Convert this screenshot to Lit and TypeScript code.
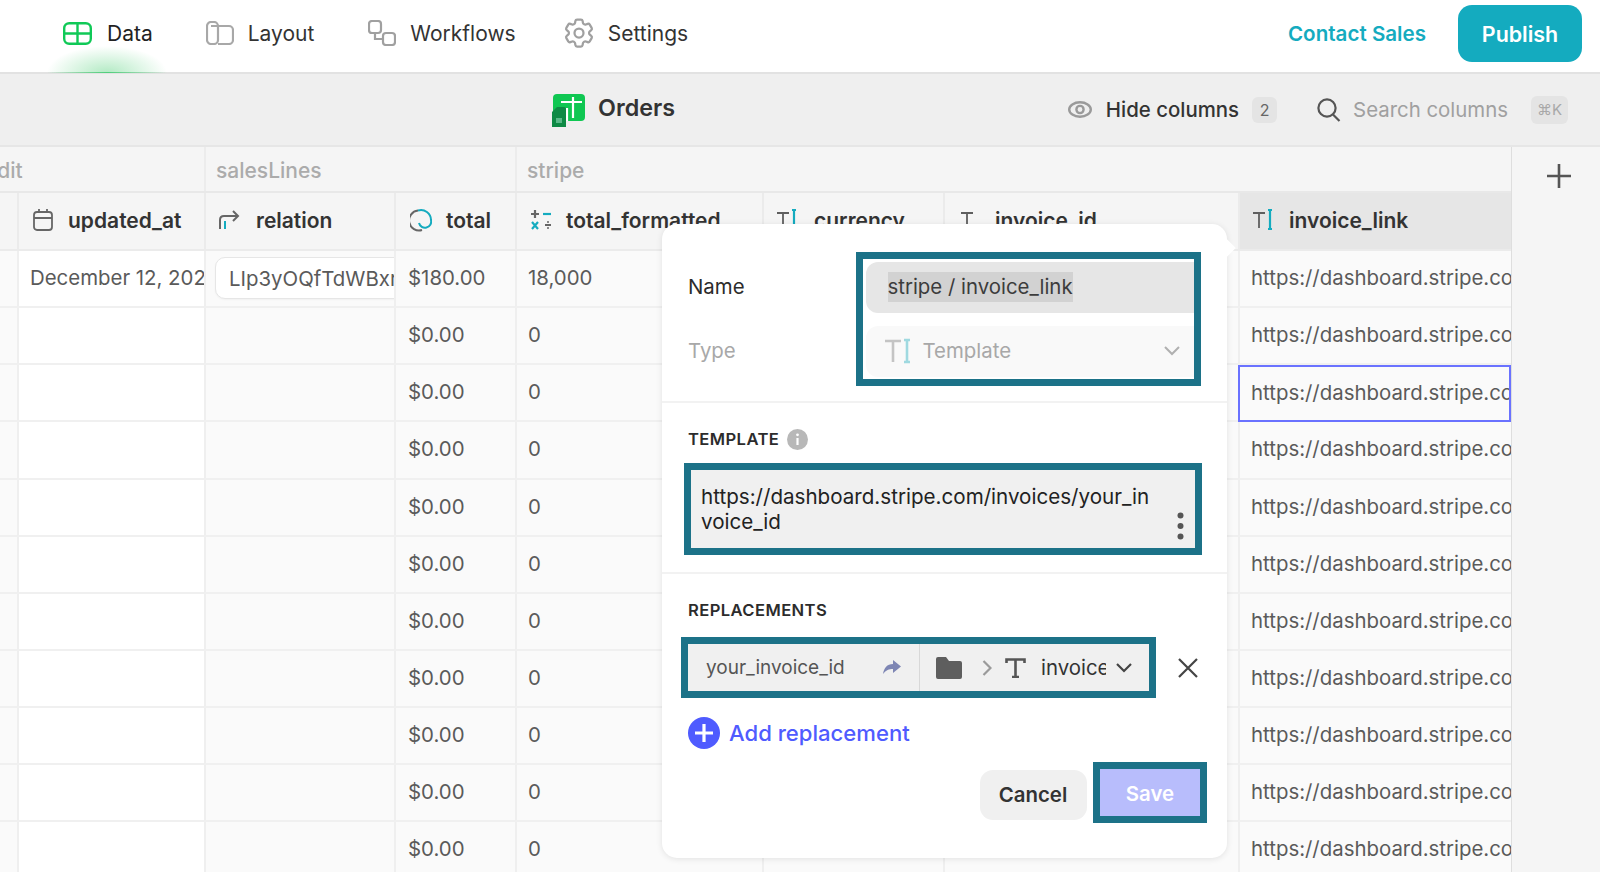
import { LitElement, html, css, svg } from "lit";
import { customElement } from "lit/decorators.js";
import { classMap } from "lit/directives/class-map.js";

const textIcon = (bar = true) => html`<svg class="hi" width="22" height="24" viewBox="0 0 22 24" fill="none">
  <path d="M1 5h12M7 5v15" stroke="#5f5f5f" stroke-width="1.8"/>
  ${bar ? svg`<path d="M16 2h4M18 2v19M16 21h4" stroke="#14abbf" stroke-width="2.2"/>` : ""}
</svg>`;

const columns = [
  { name: "updated_at", pad: 14, gap: 15, icon: html`<svg class="hi" width="20" height="24" viewBox="0 0 20 24" fill="none" stroke="#666" stroke-width="1.8"><rect x="1" y="4" width="18" height="18" rx="3"/><path d="M1 10h18M6 1v4M14 1v4"/></svg>` },
  { name: "relation", pad: 13, gap: 16, icon: html`<svg class="hi" width="21" height="22" viewBox="0 0 21 22" fill="none" stroke-width="2"><path d="M1 20V11c0-3 2-4 4-4h14M14 2l5 5-5 5" stroke="#666"/><path d="M6 20v-8" stroke="#14abbf"/></svg>` },
  { name: "total", pad: 14, gap: 14, icon: html`<svg class="hi" width="22" height="24" viewBox="0 0 22 24" fill="none" stroke-width="2"><path d="M8 2.5A10 10 0 1 0 12 22" stroke="#666"/><path d="M8 2.5A10 10 0 0 1 21 12 6 6 0 0 1 9 15" stroke="#14abbf"/></svg>` },
  { name: "total_formatted", pad: 14, gap: 15, icon: html`<svg class="hi" width="20" height="22" viewBox="0 0 20 22" fill="none" stroke-width="2.2"><path d="M4 1v8M0 5h8M14 5h6M14 16h6" stroke="#666"/><path d="M12 5h8" stroke="#14abbf"/><path d="M1 13l6 7M7 13l-6 7" stroke="#14abbf"/><circle cx="17" cy="13" r="1" fill="#666"/><circle cx="17" cy="19" r="1" fill="#666"/></svg>` },
  { name: "currency", pad: 12, gap: 16, icon: textIcon() },
  { name: "invoice_id", pad: 15, gap: 13, icon: textIcon(false) },
  { name: "invoice_link", pad: 12, gap: 15, icon: textIcon() },
];

@customElement("app-root")
export class AppRoot extends LitElement {
  static styles = css`
    :host {
      display: block;
      position: relative;
      height: 872px;
      overflow: hidden;
      background: #f5f5f5;
      font-family: Inter, "Liberation Sans", sans-serif;
      font-size: 20.4px;
      color: #333;
    }
    svg { display: block; flex: none; }

    /* top bar */
    .nav {
      height: 74px;
      box-sizing: border-box;
      background: #fff;
      border-bottom: 2px solid #e2e2e2;
      display: flex;
      align-items: center;
      padding: 0 18px 6px 63px;
    }
    .tab { display: flex; align-items: center; gap: 14px; margin-right: 54px; color: #333; position: relative; font-size: 21px; }
    .tab.on { color: #222; gap: 15px; margin-right: 53px; }
    .tab.wf { margin-right: 48px; }
    .glow {
      position: absolute;
      left: -16px;
      top: 25px;
      width: 120px;
      height: 27px;
      background:
        linear-gradient(90deg, rgba(16, 200, 80, 0), rgba(16, 200, 80, 0.55), rgba(16, 200, 80, 0)) bottom / 100% 1px no-repeat,
        radial-gradient(ellipse 50% 100% at 50% 100%, rgba(16, 190, 70, 0.32), rgba(16, 190, 70, 0));
    }
    .contact { margin-left: auto; color: #14abbf; font-weight: 600; font-size: 20.6px; margin-right: 32px; }
    .publish {
      width: 124px;
      height: 57px;
      margin-top: 1px;
      border-radius: 14px;
      background: #14abbf;
      color: #fff;
      font-weight: 600;
      font-size: 21.4px;
      display: flex;
      align-items: center;
      justify-content: center;
    }

    /* title bar */
    .bar {
      height: 73px;
      box-sizing: border-box;
      background: #efefef;
      border-bottom: 2px solid #e6e6e6;
      display: flex;
      align-items: center;
      padding: 0 32px 4px 552px;
    }
    .logo { margin-top: 4px; }
    .title { font-size: 23.3px; font-weight: 600; margin-left: 12px; color: #333; }
    .tools { margin-left: auto; display: flex; align-items: center; padding-top: 4px; }
    .hide { margin-left: 14px; color: #333; font-weight: 500; }
    .badge {
      margin-left: 13px;
      width: 25px;
      height: 26px;
      border-radius: 6px;
      background: #e4e4e4;
      color: #666;
      font-size: 16px;
      display: flex;
      align-items: center;
      justify-content: center;
    }
    .search { margin-left: 40px; }
    .placeholder { margin-left: 12px; color: #a0a0a0; }
    .kbd {
      margin-left: 23px;
      width: 37px;
      height: 28px;
      border-radius: 6px;
      background: #e4e4e4;
      color: #a8a8a8;
      font-size: 15px;
      display: flex;
      align-items: center;
      justify-content: center;
    }

    /* table */
    .page { display: flex; }
    .table { width: 1512px; flex: none; overflow: hidden; border-right: 1px solid #dedede; box-sizing: border-box; }
    .add { padding: 15px 0 0 33px; }
    .groups, .row, .heads {
      display: grid;
      grid-template-columns: 17px 187px 190px 121px 247px 181px 295px 273px;
    }
    .groups {
      height: 46px;
      box-sizing: border-box;
      border-bottom: 2px solid #e8e8e8;
      color: #ababab;
      font-weight: 500;
      font-size: 21px;
    }
    .group {
      display: flex;
      align-items: center;
      padding: 2px 0 0 10px;
      border-left: 2px solid #ececec;
      overflow: hidden;
      white-space: nowrap;
    }
    .group.first { border-left: 0; padding-left: 0; grid-column: span 2; }
    .group.first span { margin-left: -35px; }
    .group.sales { grid-column: span 2; }
    .group.stripe { grid-column: span 4; }
    .heads { height: 58px; }
    .head {
      display: flex;
      align-items: center;
      white-space: nowrap;
      overflow: hidden;
      box-sizing: border-box;
      padding-bottom: 2px;
      font-weight: 600;
      font-size: 21px;
      color: #333;
      border-left: 2px solid #ebebeb;
      border-bottom: 2px solid #ebebeb;
    }
    .head.edge { border-left: 0; }
    .head.active { background: #e6e6e6; }
    .row { height: 57.14px; }
    .cell {
      display: flex;
      align-items: center;
      box-sizing: border-box;
      padding: 0 0 2px 11px;
      background: #fafafa;
      color: #5a5a5a;
      white-space: nowrap;
      overflow: hidden;
      border-left: 2px solid #efefef;
      border-bottom: 2px solid #f0f0f0;
    }
    .cell.edge { border-left: 0; padding: 0; }
    .cell.date { background: #fff; }
    .cell.money { padding-left: 12px; }
    .cell.picked { border: 2px solid #6a72ff; }
    .chip {
      height: 42px;
      padding-left: 13px;
      margin: 1px 0 0 -2px;
      min-width: 190px;
      display: flex;
      align-items: center;
      background: #fff;
      border: 1.5px solid #e6e6e6;
      border-radius: 10px;
      box-sizing: border-box;
      box-shadow: 0 1px 2px rgba(0, 0, 0, 0.04);
    }

    /* popover */
    .popup {
      position: absolute;
      left: 662px;
      top: 224px;
      width: 565px;
      height: 634px;
      box-sizing: border-box;
      background: #fff;
      border-radius: 15px;
      box-shadow: 0 1px 6px rgba(0, 0, 0, 0.1);
      color: #2c2c2c;
    }
    .tip {
      position: absolute;
      left: -2px;
      top: 0;
      width: 100%;
      height: 100%;
      pointer-events: none;
    }
    .tip::after {
      content: "";
      position: absolute;
      right: -7px;
      top: 15px;
      width: 18px;
      height: 18px;
      background: #fff;
      transform: rotate(45deg);
    }
    .sec { position: relative; padding: 0 26px; border-bottom: 2px solid #f2f2f2; box-sizing: border-box; }
    .sec.one { height: 179px; padding-top: 28px; display: flex; }
    .sec.two { height: 171px; padding-top: 24px; }
    .sec.three { border: 0; padding-top: 24px; }
    .labels { width: 167.5px; flex: none; padding-top: 9px; display: flex; flex-direction: column; }
    .labels div { height: 51px; display: flex; align-items: center; }
    .labels div + div { margin-top: 13px; color: #a8a8a8; }
    .mark { box-sizing: border-box; border: 7px solid #1c7288; }
    .fields {
      width: 345.5px;
      height: 134px;
      padding: 3px 0 0 3px;
      overflow: hidden;
    }
    .input {
      height: 51px;
      width: 345px;
      border-radius: 12px;
      background: #e6e6e6;
      display: flex;
      align-items: center;
      padding: 0 0 2px 22px;
      box-sizing: border-box;
      color: #3c3c3c;
    }
    .input span { background: #d2d2d2; line-height: 30px; }
    .select {
      margin-top: 13px;
      height: 51px;
      width: 347px;
      border-radius: 12px;
      background: #f9f9f9;
      display: flex;
      align-items: center;
      padding: 0 0 2px 18px;
      box-sizing: border-box;
      color: #a8a8a8;
    }
    .select .v { margin-left: 11px; flex: 1; }
    .select svg:last-child { margin-right: 33px; }
    .caps { font-size: 16.6px; font-weight: 600; color: #2c2c2c; display: flex; align-items: center; gap: 8px; height: 24px; letter-spacing: 0.4px; }
    .template {
      margin: 12px -1px 0 -4px;
      height: 92px;
      background: #f0f0f0;
      display: flex;
      padding: 14px 11px 0 10px;
      color: #222;
      font-size: 20.6px;
      line-height: 25px;
    }
    .template .t { width: 454px; word-break: break-all; }
    .template svg { margin: 28px 0 0 22px; }
    .replace { display: flex; align-items: center; margin: 15px 0 0 -7px; }
    .pair {
      width: 475px;
      height: 61px;
      background: #f0f0f0;
      display: flex;
      align-items: center;
      color: #555;
    }
    .pair .left {
      width: 232px;
      height: 100%;
      flex: none;
      display: flex;
      align-items: center;
      justify-content: space-between;
      padding: 0 18px 1px 18px;
      box-sizing: border-box;
      font-size: 19px;
      border-right: 1px solid #d8d8d8;
    }
    .pair .right { display: flex; align-items: center; padding-left: 16px; }
    .clip { width: 65px; overflow: hidden; margin-left: 15px; color: #333; white-space: nowrap; }
    .gt { margin-left: 20px; }
    .serif { margin-left: 13px; }
    .drop { margin-left: 10px; }
    .close { margin-left: 22px; }
    .more { display: flex; align-items: center; gap: 9px; margin: 17px 0 0 0; height: 36px; color: #4f5bff; font-size: 22.1px; font-weight: 500; }
    .actions { display: flex; justify-content: flex-end; margin: 11px -6px 0 0; align-items: center; gap: 6.5px; }
    .cancel {
      width: 107px;
      height: 50px;
      margin-top: 4px;
      border-radius: 13px;
      background: #f0f0f0;
      font-weight: 600;
      color: #333;
      display: flex;
      align-items: center;
      justify-content: center;
    }
    .save { width: 114px; height: 61px; }
    .save div {
      height: 100%;
      box-sizing: border-box;
      padding-top: 2px;
      background: #b8bdfc;
      color: #fff;
      font-weight: 600;
      display: flex;
      align-items: center;
      justify-content: center;
    }
  `;

  renderNav() {
    return html`<div class="nav">
      <div class="tab on">
        <svg width="29" height="23" viewBox="0 0 29 23" fill="none" stroke="#10c957" stroke-width="2.4"><rect x="1.2" y="1.2" width="26.6" height="20.6" rx="5"/><path d="M1.2 11.5h26.6M14.5 1.2v20.6"/></svg>
        Data
        <div class="glow"></div>
      </div>
      <div class="tab">
        <svg width="28" height="24" viewBox="0 0 28 24" fill="none" stroke="#a8a8a8" stroke-width="2.2"><path d="M5 5h18a4 4 0 0 1 4 4v10a4 4 0 0 1-4 4H12"/><rect x="1" y="1" width="11" height="22" rx="4"/></svg>
        Layout
      </div>
      <div class="tab wf">
        <svg width="28" height="26" viewBox="0 0 28 26" fill="none" stroke="#a0a0a0" stroke-width="2.2"><rect x="1" y="1" width="12" height="12" rx="3"/><rect x="15" y="13" width="12" height="12" rx="3"/><path d="M7 13v6h8"/></svg>
        Workflows
      </div>
      <div class="tab">
        <svg width="30" height="30" viewBox="2 2 20 20" fill="none" stroke="#a0a0a0" stroke-width="1.5"><path d="M9.594 3.94c.09-.542.56-.94 1.11-.94h2.593c.55 0 1.02.398 1.11.94l.213 1.281c.063.374.313.686.645.87.074.04.147.083.22.127.325.196.72.257 1.075.124l1.217-.456a1.125 1.125 0 0 1 1.37.49l1.296 2.247a1.125 1.125 0 0 1-.26 1.431l-1.003.827c-.293.241-.438.613-.43.992a7.723 7.723 0 0 1 0 .255c-.008.378.137.75.43.991l1.004.827c.424.35.534.955.26 1.43l-1.298 2.247a1.125 1.125 0 0 1-1.369.491l-1.217-.456c-.355-.133-.75-.072-1.076.124a6.47 6.47 0 0 1-.22.128c-.331.183-.581.495-.644.869l-.213 1.281c-.09.543-.56.94-1.11.94h-2.594c-.55 0-1.019-.398-1.11-.94l-.213-1.281c-.062-.374-.312-.686-.644-.87a6.52 6.52 0 0 1-.22-.127c-.325-.196-.72-.257-1.076-.124l-1.217.456a1.125 1.125 0 0 1-1.369-.49l-1.297-2.247a1.125 1.125 0 0 1 .26-1.431l1.004-.827c.292-.24.437-.613.43-.991a6.932 6.932 0 0 1 0-.255c.007-.38-.138-.751-.43-.992l-1.004-.827a1.125 1.125 0 0 1-.26-1.43l1.297-2.247a1.125 1.125 0 0 1 1.37-.491l1.216.456c.356.133.751.072 1.076-.124.072-.044.146-.086.22-.128.332-.183.582-.495.644-.869l.214-1.28Z"/><path d="M15 12a3 3 0 1 1-6 0 3 3 0 0 1 6 0Z"/></svg>
        Settings
      </div>
      <div class="contact">Contact Sales</div>
      <div class="publish">Publish</div>
    </div>`;
  }

  renderBar() {
    return html`<div class="bar">
      <svg class="logo" width="34" height="34" viewBox="0 0 34 34">
        <rect x="1" y="1" width="32" height="27" rx="4" fill="#0fc752"/>
        <path d="M9 9h21M21 4v21M15 15v13" stroke="#fff" stroke-width="2.2" fill="none"/>
        <path d="M0 19l5-5h7a2 2 0 0 1 2 2v18H0z" fill="#0e8a45"/>
        <rect x="4" y="25" width="6" height="5" fill="#59b988"/>
      </svg>
      <div class="title">Orders</div>
      <div class="tools">
        <svg width="24" height="17" viewBox="0 0 24 17" fill="none" stroke="#9a9a9a" stroke-width="2.4"><ellipse cx="12" cy="8.5" rx="10.8" ry="7.2"/><circle cx="12" cy="8.5" r="3.6"/></svg>
        <div class="hide">Hide columns</div>
        <div class="badge">2</div>
        <svg class="search" width="24" height="24" viewBox="0 0 24 24" fill="none" stroke="#555" stroke-width="2.2"><circle cx="10" cy="10" r="8.6"/><path d="M16 16.5l6.5 6.5"/></svg>
        <div class="placeholder">Search columns</div>
        <div class="kbd">⌘K</div>
      </div>
    </div>`;
  }

  renderTable() {
    const rows = Array.from({ length: 11 }, (_, i) => i);
    return html`<div class="page">
      <div class="table">
        <div class="groups">
          <div class="group first"><span>credit</span></div>
          <div class="group sales">salesLines</div>
          <div class="group stripe">stripe</div>
        </div>
        <div class="heads">
          <div class="head edge"></div>
          ${columns.map(
            (c) => html`<div
              class=${classMap({ head: true, active: c.name === "invoice_link" })}
              style="padding-left:${c.pad}px;gap:${c.gap}px"
            >${c.icon}${c.name}</div>`
          )}
        </div>
        ${rows.map(
          (i) => html`<div class="row">
            <div class="cell edge"></div>
            <div class="cell date">${i === 0 ? "December 12, 2022" : ""}</div>
            <div class="cell">${i === 0 ? html`<div class="chip">LIp3yOQfTdWBxr</div>` : ""}</div>
            <div class="cell money">${i === 0 ? "$180.00" : "$0.00"}</div>
            <div class="cell">${i === 0 ? "18,000" : "0"}</div>
            <div class="cell"></div>
            <div class="cell"></div>
            <div class=${classMap({ cell: true, picked: i === 2 })}>https://dashboard.stripe.com/invoices</div>
          </div>`
        )}
      </div>
      <div class="add">
        <svg width="28" height="28" viewBox="0 0 28 28" stroke="#555" stroke-width="2.6"><path d="M14 2v24M2 14h24"/></svg>
      </div>
    </div>`;
  }

  renderPopup() {
    return html`<div class="popup">
      <div class="tip"></div>
      <div class="sec one">
        <div class="labels"><div>Name</div><div>Type</div></div>
        <div class="mark fields">
          <div class="input"><span>stripe / invoice_link</span></div>
          <div class="select">
            <svg width="28" height="26" viewBox="0 0 28 26" fill="none" stroke-width="2.6"><path d="M1 3h16M9 3v21" stroke="#c4c4c4"/><path d="M20 2h6M23 2v22M20 24h6" stroke="#9fd9e0"/></svg>
            <span class="v">Template</span>
            <svg width="16" height="10" viewBox="0 0 16 10" fill="none" stroke="#b0b0b0" stroke-width="2"><path d="M1 1l7 7 7-7"/></svg>
          </div>
        </div>
      </div>
      <div class="sec two">
        <div class="caps">TEMPLATE
          <svg width="21" height="21" viewBox="0 0 21 21"><circle cx="10.5" cy="10.5" r="10.5" fill="#b8b8b8"/><path d="M10.5 9v7" stroke="#fff" stroke-width="2.2"/><circle cx="10.5" cy="5.8" r="1.4" fill="#fff"/></svg>
        </div>
        <div class="mark template">
          <div class="t">https://dashboard.stripe.com/invoices/your_invoice_id</div>
          <svg width="7" height="28" viewBox="0 0 7 28" fill="#555"><circle cx="3.5" cy="3.5" r="3"/><circle cx="3.5" cy="14" r="3"/><circle cx="3.5" cy="24.5" r="3"/></svg>
        </div>
      </div>
      <div class="sec three">
        <div class="caps">REPLACEMENTS</div>
        <div class="replace">
          <div class="mark pair">
            <div class="left">your_invoice_id
              <svg width="18" height="14" viewBox="0 0 18 14" fill="#7e86b4"><path d="M10 0l8 6.5L10 13V9C6 9 3 10 0 14 1 8 4 4 10 4z"/></svg>
            </div>
            <div class="right">
              <svg width="26" height="22" viewBox="0 0 26 22" fill="#5e5e5e"><path d="M0 2a2 2 0 0 1 2-2h8l3 4h11a2 2 0 0 1 2 2v14a2 2 0 0 1-2 2H2a2 2 0 0 1-2-2z"/></svg>
              <svg class="gt" width="10" height="16" viewBox="0 0 10 16" fill="none" stroke="#9a9a9a" stroke-width="2.2"><path d="M1.5 1l7 7-7 7"/></svg>
              <svg class="serif" width="21" height="20" viewBox="0 0 21 20" fill="none" stroke="#555" stroke-width="2.6"><path d="M1.5 5V1.5h18V5M10.5 1.5V19M7 19h7"/></svg>
              <div class="clip">invoice_id</div>
              <svg class="drop" width="16" height="10" viewBox="0 0 16 10" fill="none" stroke="#444" stroke-width="2.2"><path d="M1 1l7 7 7-7"/></svg>
            </div>
          </div>
          <svg class="close" width="20" height="20" viewBox="0 0 20 20" stroke="#444" stroke-width="2.2"><path d="M1 1l18 18M19 1L1 19"/></svg>
        </div>
        <div class="more">
          <svg width="32" height="32" viewBox="0 0 32 32"><circle cx="16" cy="16" r="16" fill="#4f5bff"/><path d="M16 7v18M7 16h18" stroke="#fff" stroke-width="3.2"/></svg>
          Add replacement
        </div>
        <div class="actions">
          <div class="cancel">Cancel</div>
          <div class="mark save"><div>Save</div></div>
        </div>
      </div>
    </div>`;
  }

  render() {
    return html`${this.renderNav()}${this.renderBar()}${this.renderTable()}${this.renderPopup()}`;
  }
}
